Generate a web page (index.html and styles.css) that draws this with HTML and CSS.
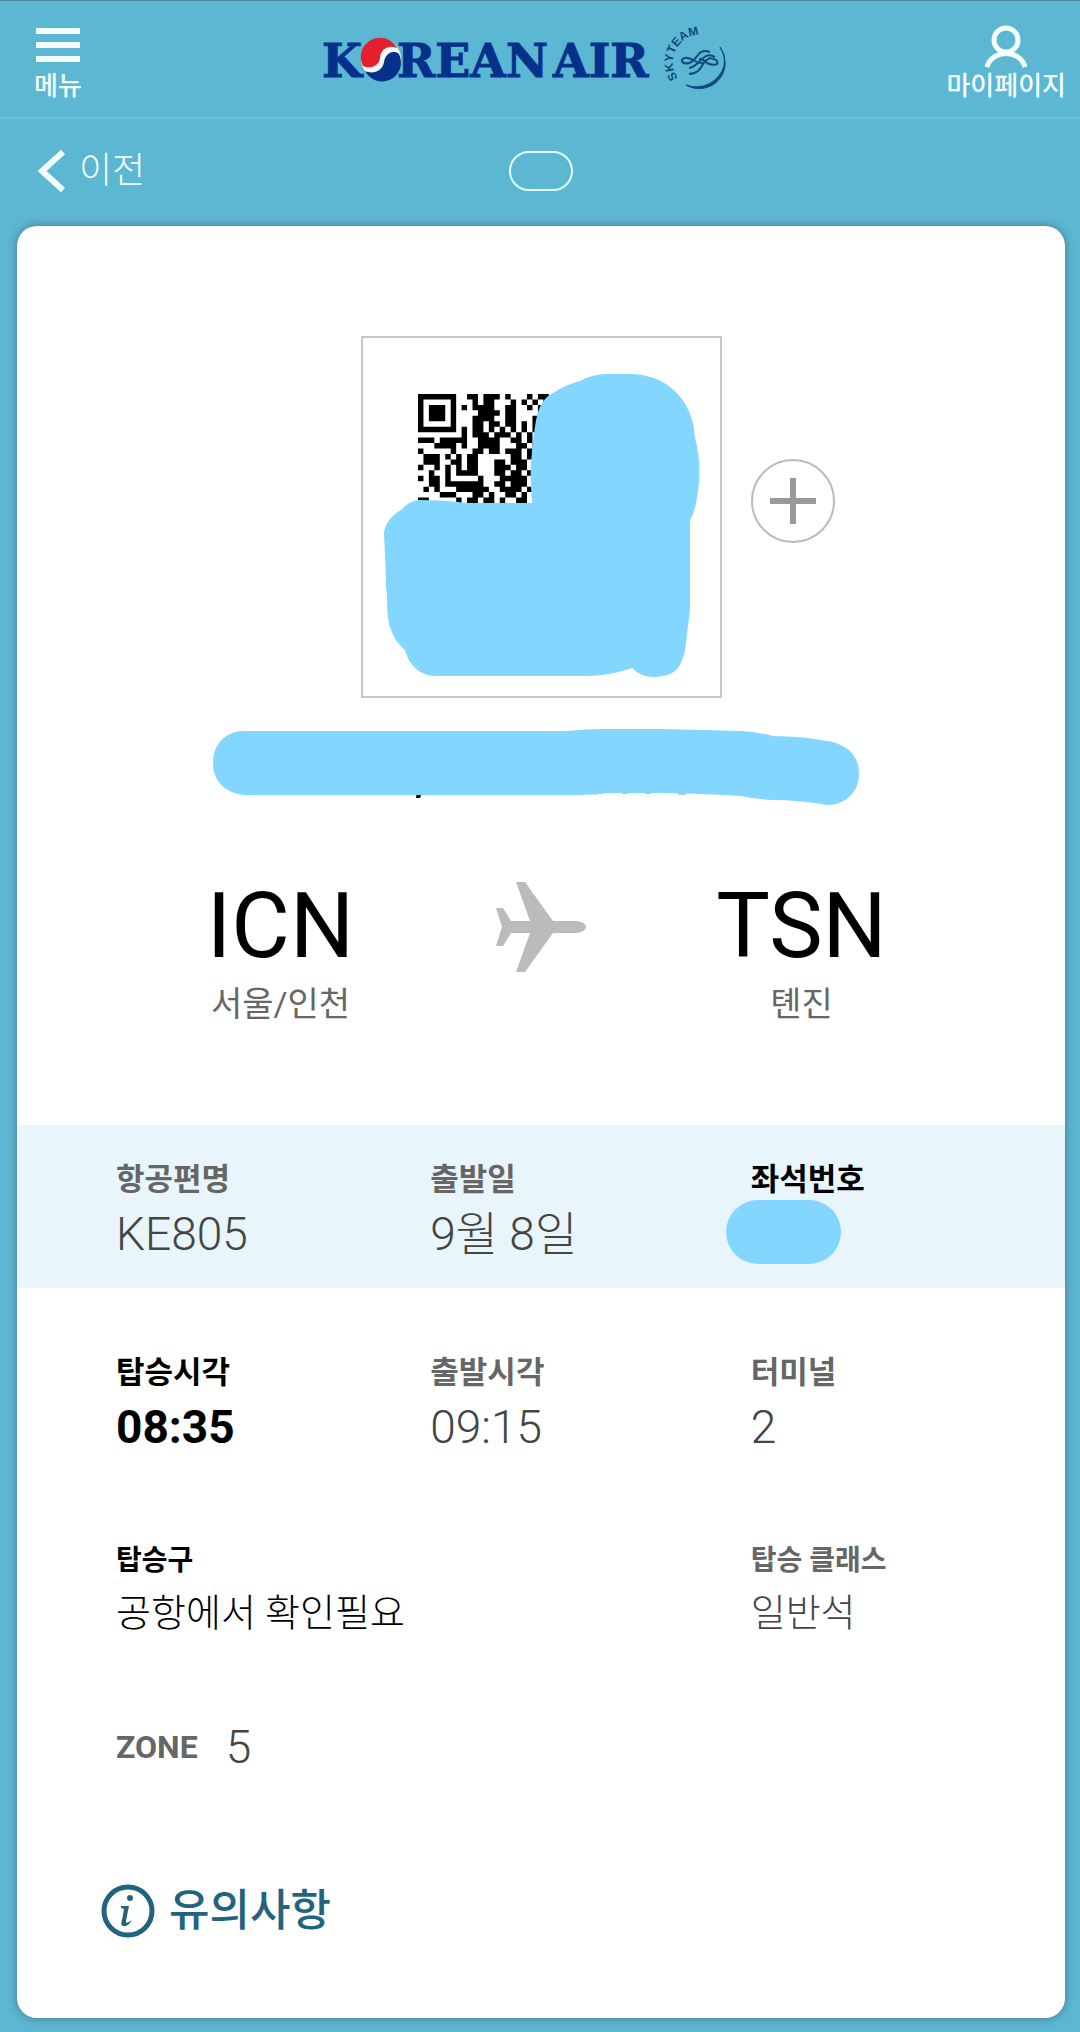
FILE: index.html
```html
<!DOCTYPE html>
<html lang="ko">
<head>
<meta charset="utf-8">
<meta name="viewport" content="width=device-width, initial-scale=1">
<title>Korean Air</title>
<link rel="stylesheet" href="styles.css">
</head>
<body>
<header class="header">
  <button class="nav-button nav-menu" type="button">
    <svg width="44" height="44" viewBox="0 0 44 44" fill="currentColor" aria-hidden="true"><path d="M0 3h44v6H0zM0 17h44v6H0zM0 31h44v6H0z"/></svg>
    <span>메뉴</span>
  </button>
  <a class="logo" href="#" aria-label="Korean Air">
    <svg width="440" height="66" viewBox="320 24 440 66">
      <g class="logo-word">
        <text x="322" y="76">K</text>
        <text x="397" y="76">REAN</text>
        <text x="553" y="76">AIR</text>
      </g>
      <circle cx="381" cy="58" r="20" fill="#f4f6fa"/>
      <path d="M363 65A19 19 0 0 1 397 47C388 43 380 49 380 57C379 66 369 68 363 65Z" fill="#e3202b"/>
      <path d="M399 53A19 19 0 0 1 365 70C374 74 383 69 384 61C386 51 394 49 399 53Z" fill="#06318b"/>
      <g fill="none" stroke="#0d4a80">
        <path id="sky-arc" d="M678 77A25 25 0 0 1 722 45" stroke="none"/>
        <path d="M720 46A26 26 0 0 1 686 84A29 29 0 0 0 724 65A27 27 0 0 0 720 46Z" stroke-width="1" fill="#0d4a80"/>
        <path d="M710 51C698 46 698 59 689 62C682 64 679 58 685 57C691 55 697 64 703 62M715 56C703 49 701 65 689 67M716 59C721 64 713 65 707 62C704 59 702 58 699 58M716 59C711 56 709 57 705 60C701 66 700 72 689 73" stroke-width="2"/>
      </g>
      <text class="sky-text"><textPath href="#sky-arc">SKYTEAM</textPath></text>
    </svg>
  </a>
  <button class="nav-button nav-mypage" type="button">
    <svg width="44" height="44" viewBox="0 0 44 44" fill="none" stroke="currentColor" stroke-width="5" aria-hidden="true"><circle cx="22" cy="15" r="12"/><path d="M3 42C8 24 36 24 41 42"/></svg>
    <span>마이페이지</span>
  </button>
</header>

<nav class="subnav">
  <a class="back" href="#">
    <svg width="28" height="42" viewBox="0 0 28 42" fill="none" stroke="currentColor" stroke-width="6" aria-hidden="true"><path d="M26 2L5 21L26 40"/></svg>
    <span>이전</span>
  </a>
  <span class="page-pill"></span>
</nav>

<main class="card">
  <section class="barcode">
    <svg class="barcode-box" width="361" height="362" viewBox="0 0 361 362" aria-hidden="true">
      <rect x="1" y="1" width="359" height="360" fill="#fff" stroke="#c8c8c8" stroke-width="2"/>
      <path id="qr" transform="translate(57 58) scale(5.45)" fill="#000"/>
      <path fill="#82d6ff" d="M171 167Q169 140 170 127L172 104C175 90 174 66 192 57Q204 49 219 45Q232 38 245 38H272C306 40 332 63 334 102Q341 128 337 155Q335 174 329 184V274L324 314C319 337 310 340 293 341Q280 341 271 332Q248 340 225 340H75C59 340 48 329 44 314C26 299 26 278 26 257Q24 249 25 243L23 197C24 187 32 178 40 174Q48 165 58 164Q84 164 106 167Z"/>
    </svg>
    <button class="zoom" type="button" aria-label="확대">
      <svg width="46" height="46" viewBox="0 0 46 46" stroke="#999" stroke-width="6" aria-hidden="true"><path d="M23 0V46M0 23H46"/></svg>
    </button>
  </section>

  <svg class="passenger" width="656" height="76" viewBox="212 729 656 76" aria-hidden="true">
    <path fill="#000" d="M416 790h6l-3 8h-4z"/>
    <path fill="none" stroke="#888" d="M593 794l8-1M621 793h6M644 793h6M677 794l8 0"/>
    <path fill="#82d6ff" d="M243 731H566Q584 729 602 729H660L740 731Q756 732 772 736Q802 736 832 742C849 747 858 758 858 773C858 793 844 805 826 805Q798 800 772 800Q754 799 740 796Q690 793 657 793H607Q590 795 570 795H243C224 793 212 781 212 763C212 745 224 731 243 731Z"/>
  </svg>

  <section class="route">
    <div class="airport"><strong class="code">ICN</strong><span class="city">서울/인천</span></div>
    <svg class="plane" width="90" height="90" viewBox="0 0 90 90" fill="#bbb" aria-hidden="true"><path d="M20 0H29L57 39H80Q90 40 90 45Q90 50 80 51H57L29 90H20L34 51H15L7 64H0L6 45L0 26H7L15 39H34Z"/></svg>
    <div class="airport"><strong class="code">TSN</strong><span class="city">톈진</span></div>
  </section>

  <dl class="facts facts-band">
    <div class="fact"><dt>항공편명</dt><dd>KE805</dd></div>
    <div class="fact"><dt>출발일</dt><dd>9월 8일</dd></div>
    <div class="fact key"><dt>좌석번호</dt><dd><span class="seat"></span></dd></div>
  </dl>

  <dl class="facts facts-times">
    <div class="fact key"><dt>탑승시각</dt><dd class="bold">08:35</dd></div>
    <div class="fact"><dt>출발시각</dt><dd>09:15</dd></div>
    <div class="fact"><dt>터미널</dt><dd>2</dd></div>
  </dl>

  <dl class="facts facts-gate">
    <div class="fact wide key"><dt>탑승구</dt><dd>공항에서 확인필요</dd></div>
    <div class="fact"><dt>탑승 클래스</dt><dd>일반석</dd></div>
  </dl>

  <dl class="zone"><dt>ZONE</dt><dd>5</dd></dl>

  <h2 class="notice">
    <svg width="54" height="54" viewBox="0 0 54 54" aria-hidden="true"><circle cx="27" cy="27" r="24" fill="none" stroke="#22637f" stroke-width="5"/><circle cx="29" cy="14" r="3" fill="#22637f"/><path d="M20 22H28L25 37Q24 41 31 36Q27 43 22 42Q19 41 21 36L23 25L20 24Z" fill="#22637f"/></svg>
    <span>유의사항</span>
  </h2>
</main>
<script src="qr.js"></script>
</body>
</html>
```
FILE: styles.css
```css
* { box-sizing: border-box; }

body {
  margin: 0;
  padding-bottom: 14px;
  background: #5cb7d3;
  font-family: Roboto, "Noto Sans CJK KR", sans-serif;
  color: #444;
}

button {
  padding: 0;
  border: 0;
  background: none;
  font: inherit;
  color: inherit;
}

a { color: inherit; text-decoration: none; }
svg { display: block; overflow: visible; }
dl, dd { margin: 0; }

.header {
  display: grid;
  grid-template-columns: 1fr auto 1fr;
  align-items: start;
  height: 119px;
  padding-top: 24px;
  border-top: 1px solid #4c8799;
  border-bottom: 2px solid #69c2dc;
}

.nav-button {
  display: flex;
  flex-direction: column;
  align-items: center;
  color: #f4ffff;
  font-size: 26px;
  font-weight: 500;
  line-height: 34px;
}

.nav-menu { justify-self: start; margin-left: 34px; }
.nav-mypage { justify-self: end; margin-right: 14px; }

.logo-word {
  font: bold 46px "DejaVu Serif", serif;
  fill: #06318b;
  stroke: #06318b;
  stroke-width: 1px;
}

.sky-text {
  font: bold 12px "Liberation Sans", sans-serif;
  fill: #0d4a80;
}

.subnav {
  display: grid;
  grid-template-columns: 1fr auto 1fr;
  align-items: center;
  height: 107px;
  padding: 0 0 3px 2px;
  color: #f4ffff;
}

.back {
  display: flex;
  align-items: center;
  gap: 14px;
  padding-left: 35px;
  font-size: 36px;
  font-weight: 300;
  line-height: 40px;
}

.page-pill {
  width: 64px;
  height: 40px;
  border: 2px solid #e8ffff;
  border-radius: 20px;
}

.card {
  margin: 0 15px 0 17px;
  padding: 110px 0 77px;
  border-radius: 20px;
  background: #fff;
  box-shadow: 0 0 10px rgba(70, 70, 90, 0.6);
}

.barcode {
  display: grid;
  grid-template-columns: 1fr auto 1fr;
  align-items: center;
}

.barcode-box { grid-column: 2; }

.zoom {
  display: grid;
  place-items: center;
  width: 84px;
  height: 84px;
  margin: 0 0 32px 29px;
  border: 2px solid #bbb;
  border-radius: 50%;
}

.passenger { margin: 31px auto 0; }

.route {
  display: grid;
  grid-template-columns: 1fr auto 1fr;
  align-items: start;
  padding: 74px 48px 101px;
}

.airport { display: flex; flex-direction: column; align-items: center; gap: 9px; }
.code { font-size: 90px; font-weight: 400; line-height: 96px; color: #000; }
.city { font-size: 34px; line-height: 40px; color: #666; }
.plane { margin-top: 3px; }

.facts {
  display: grid;
  grid-template-columns: 314fr 320fr 298fr;
  padding: 0 16px 0 99px;
}

.fact dt {
  font-size: 31px;
  font-weight: 700;
  line-height: 40px;
  color: #666;
}

.fact dd {
  margin-top: 6px;
  font-size: 46px;
  font-weight: 300;
  line-height: 56px;
}

.fact.key dt, .fact.key dd { color: #000; }
.fact dd.bold { font-weight: 700; }
.fact.wide { grid-column: span 2; }

.facts-band {
  padding-top: 35px;
  padding-bottom: 26px;
  background: #e8f5fa;
}

.facts-times { padding-top: 65px; }
.facts-gate { padding-top: 86px; }
.facts-gate dt { font-size: 28px; }
.facts-gate dd { margin-top: 4px; font-size: 38px; }

.seat {
  display: block;
  width: 115px;
  height: 64px;
  margin: -6px 0 -2px -25px;
  border-radius: 32px;
  background: #82d6ff;
}

.zone {
  display: flex;
  align-items: center;
  gap: 28px;
  padding: 78px 0 0 99px;
  line-height: 56px;
}

.zone dt { font-size: 32px; font-weight: 700; color: #666; }
.zone dd { font-size: 46px; font-weight: 300; }

.notice {
  display: flex;
  align-items: center;
  gap: 14px;
  margin: 106px 0 0;
  padding-left: 84px;
  font-size: 44px;
  font-weight: 500;
  line-height: 60px;
  color: #22637f;
}
```
FILE: qr.js
```js
// Modules of the boarding code, one string per row.
const rows = [
  "111111100110111010001011",
  "100000100010110001010101",
  "101110101011110011001010",
  "101110100001111011000011",
  "101110100011110011000110",
  "100000100011011011010101",
  "111111101011010101010111",
  "000000001011101110101011",
  "111011111001111001101010",
  "000111101001111000110100",
  "100000100011011011101010",
  "011101010110000001101010",
  "011100110110001101110101",
  "100101010110001110110010",
  "001001011110001101101010",
  "101101000001000111110110",
  "001101111111001101110110",
  "010100011111100111101101",
  "000011100011010011010011",
  "110000010110110100110101"
];

const path = rows
  .map((row, y) => [...row].map((m, x) => (m === "1" ? `M${x} ${y}h1v1h-1z` : "")).join(""))
  .join("");

document.getElementById("qr").setAttribute("d", path);
```
